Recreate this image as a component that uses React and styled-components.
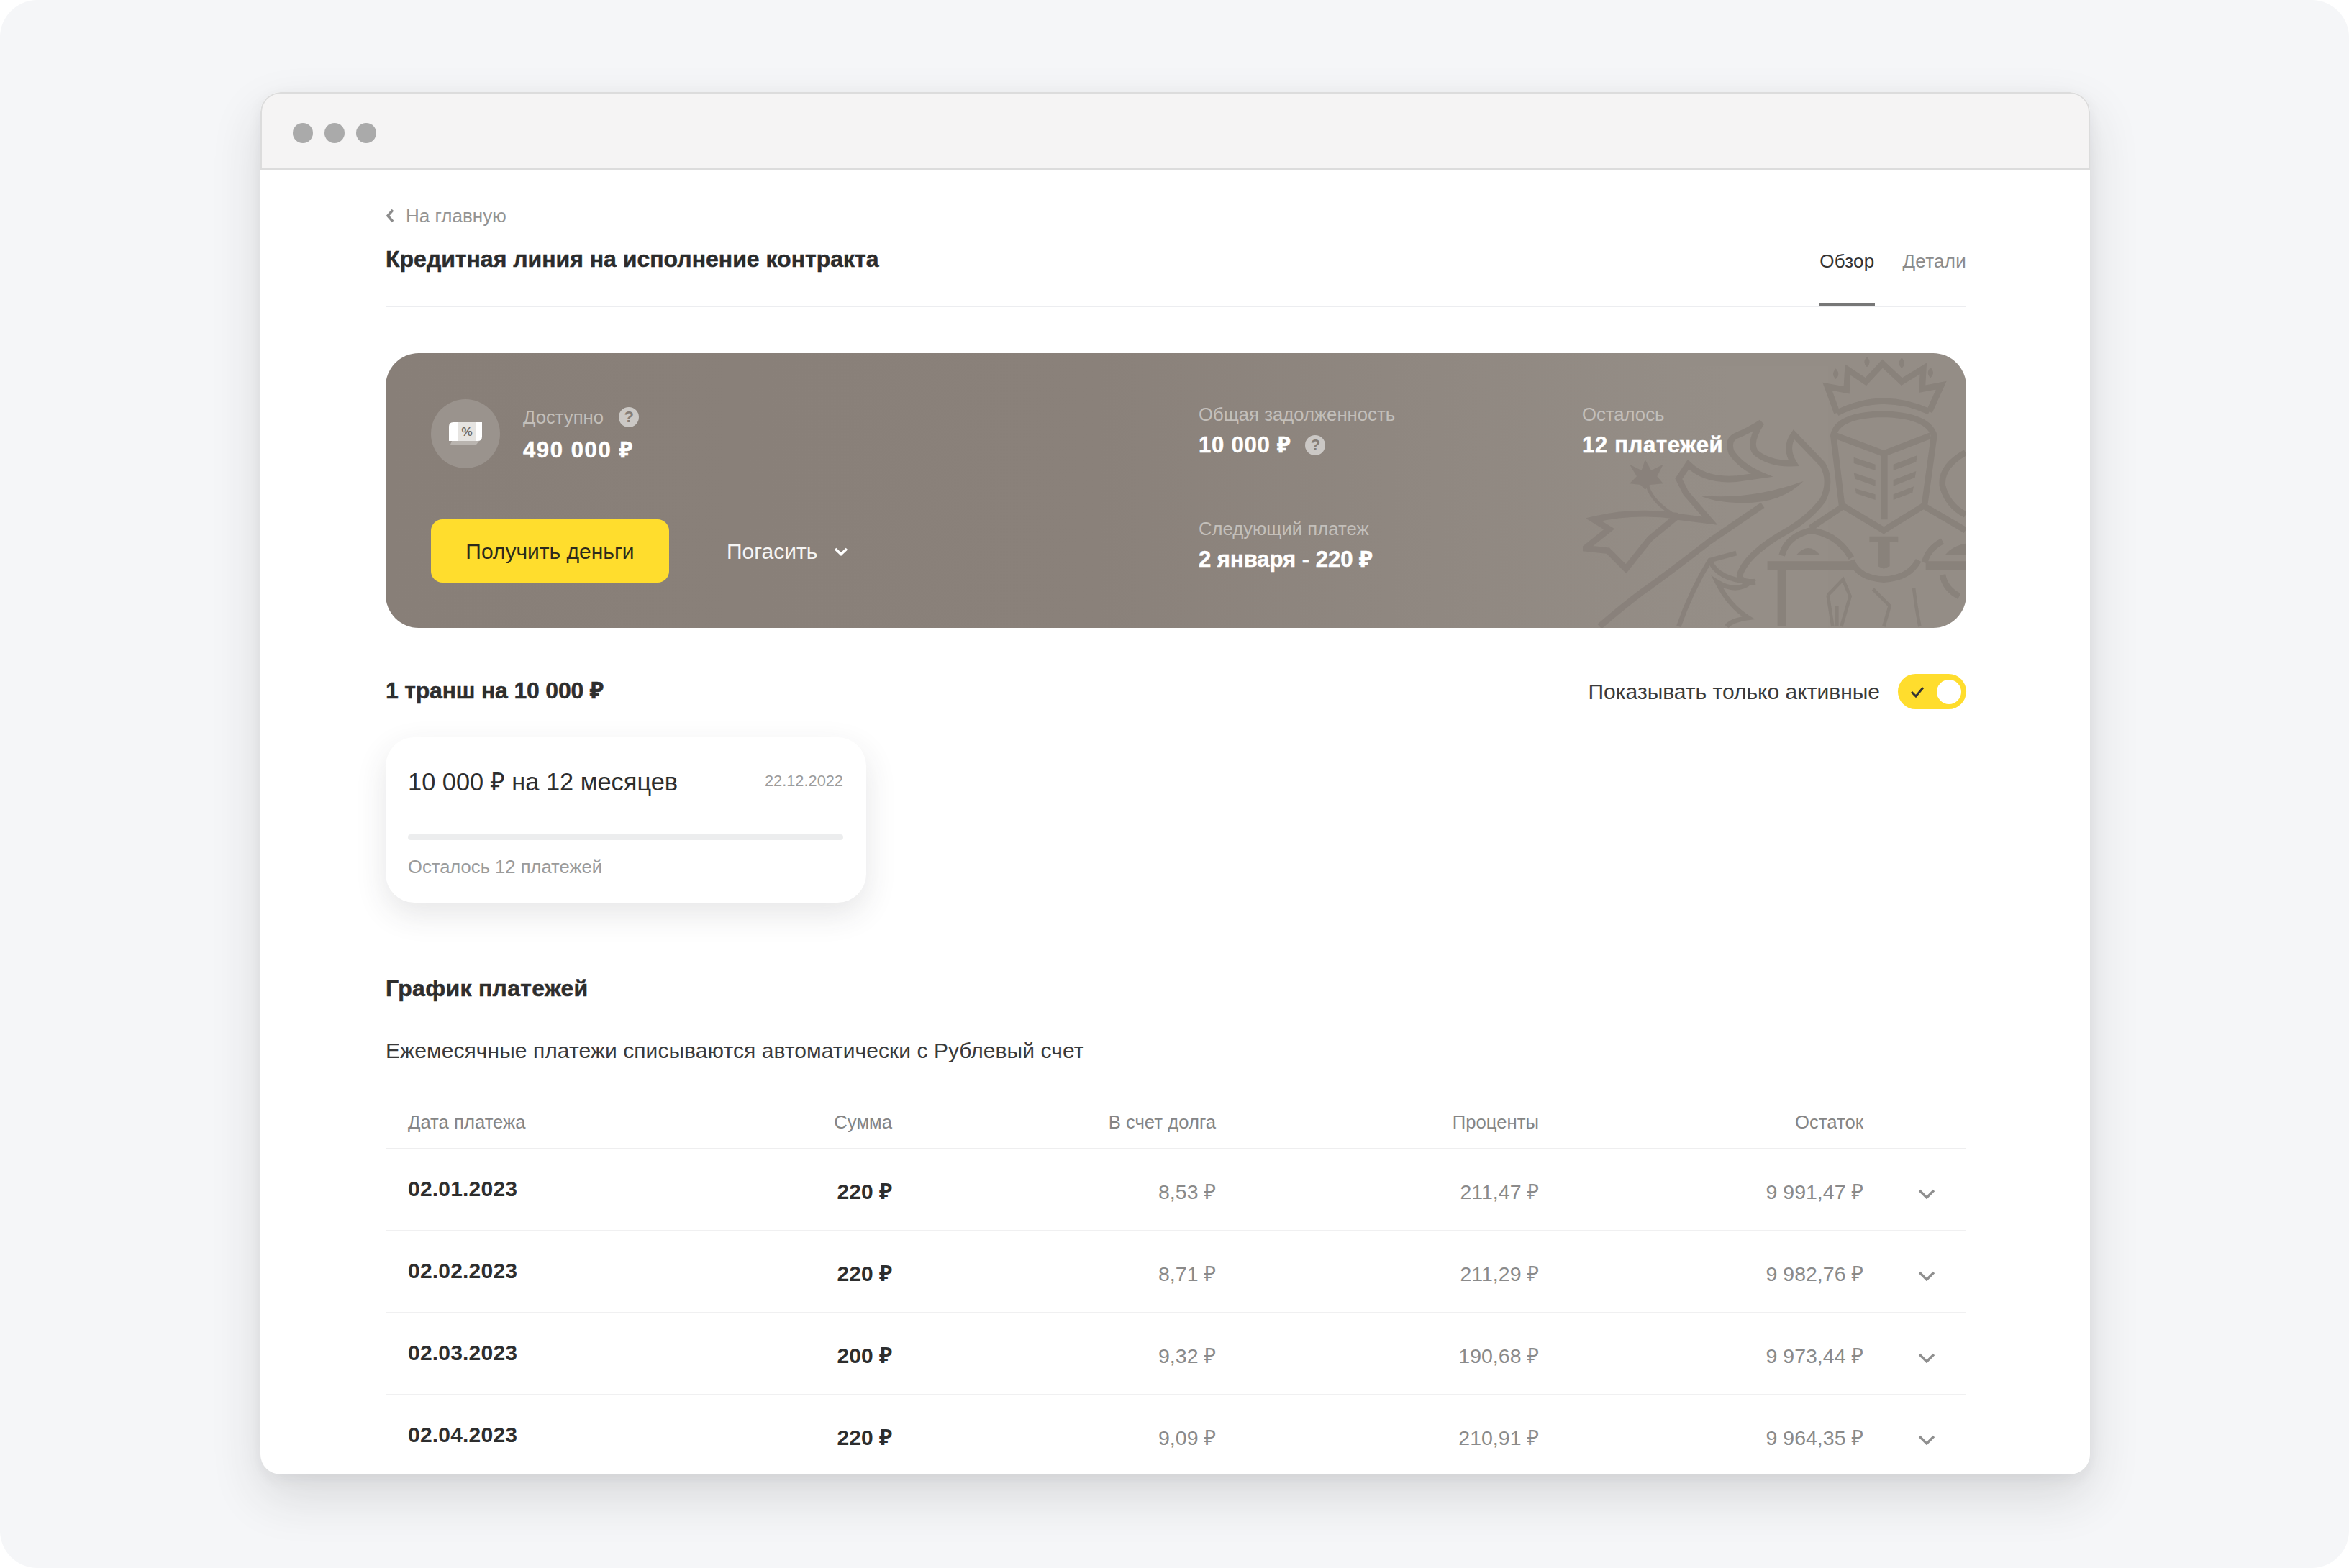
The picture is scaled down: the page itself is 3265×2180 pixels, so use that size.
import React from 'react';
import styled, { createGlobalStyle } from 'styled-components';

const Global = createGlobalStyle`
  html, body { margin: 0; padding: 0; background: #fff; }
  body { font-family: "Liberation Sans", "Noto Sans", sans-serif; color: #333; }
  * { box-sizing: border-box; }
`;

const Page = styled.div`
  width: 3265px; height: 2180px; background: #f5f6f8; border-radius: 52px;
  padding: 128px 0 0 362px; overflow: hidden;
`;
const Browser = styled.div`
  width: 2543px; height: 1922px; background: #fff; border-radius: 28px; overflow: hidden;
  box-shadow: 0 30px 70px rgba(40,40,45,.14), 0 6px 20px rgba(40,40,45,.06);
`;
const TitleBar = styled.div`
  height: 108px; background: #f5f4f4; border: 2px solid #dcdcdc; border-bottom-width: 3px;
  border-radius: 28px 28px 0 0; display: flex; align-items: center; gap: 16px; padding: 7px 0 0 43px;
`;
const Dot = styled.span`width: 28px; height: 28px; border-radius: 50%; background: #aaa;`;
const Content = styled.div`padding: 46px 172px 0 174px;`;
const BackLink = styled.div`
  height: 36px; display: flex; align-items: center; gap: 16px; color: #939393; font-size: 26px; line-height: 36px;
`;
const TitleRow = styled.div`
  height: 109px; border-bottom: 2px solid #ecedf0; display: flex; justify-content: space-between;
`;
const Title = styled.h1`
  margin: 24px 0 0; font-size: 32px; line-height: 36px; font-weight: 700; color: #2c2c2c; -webkit-text-stroke: .5px #2c2c2c;
`;
const Tabs = styled.div`display: flex; gap: 39px;`;
const Tab = styled.div`
  height: 107px; padding-top: 27px; font-size: 26px; line-height: 36px; letter-spacing: .25px;
  color: ${p => (p.$active ? '#333' : '#8b8b8b')};
  border-bottom: 4px solid ${p => (p.$active ? '#777' : 'transparent')};
`;
const Banner = styled.section`
  position: relative; overflow: hidden; margin-top: 64px; height: 382px; border-radius: 46px;
  background: linear-gradient(90deg, #887f78 0%, #8a817a 45%, #958e87 85%, #958e87 100%);
  display: flex;
`;
const Emblem = styled.svg`position: absolute; left: 1664px; top: 0; width: 532px; height: 382px;`;
const BannerLeft = styled.div`position: relative; width: 1130px; padding: 64px 0 0 63px;`;
const AvailableRow = styled.div`display: flex; gap: 32px;`;
const IconCircle = styled.div`
  width: 96px; height: 96px; border-radius: 50%; background: #9a938d;
  display: flex; align-items: center; justify-content: center;
`;
const AvailableInfo = styled.div`padding-top: 9px;`;
const LabelLine = styled.div`display: flex; align-items: center; gap: 21px; height: 32px;`;
const BannerLabel = styled.div`font-size: 25.7px; line-height: 32px; color: #c3bfba; white-space: nowrap;`;
const BannerValue = styled.div`
  font-size: 31px; line-height: 36px; font-weight: 700; color: #fff; white-space: nowrap; -webkit-text-stroke: .5px #fff;
  display: flex; align-items: center; gap: 20px; margin-top: ${p => p.$gap}px; letter-spacing: ${p => p.$track || 0}px;
`;
const Help = styled.span`
  width: 28px; height: 28px; border-radius: 50%; background: #cbc8c5; color: #857d77; letter-spacing: 0; -webkit-text-stroke: 0;
  font-size: 22px; font-weight: 700; line-height: 28px; text-align: center;
`;
const Actions = styled.div`display: flex; align-items: center; margin-top: 71px;`;
const PrimaryButton = styled.button`
  width: 331px; height: 88px; border: 0; border-radius: 16px; background: #ffdd2d; color: #2c2a1c;
  font: 400 30px "Liberation Sans", sans-serif; padding: 2px 0 0;
`;
const GhostButton = styled.button`
  margin-left: 80px; border: 0; background: none; padding: 2px 0 0; display: flex; align-items: center; gap: 23px;
  font: 400 30px "Liberation Sans", sans-serif; color: #f6f5f4;
`;
const BannerGrid = styled.div`
  position: relative; flex: 1; display: grid; grid-template-columns: 533px 1fr; grid-auto-rows: 159px; padding-top: 69px;
`;
const SectionRow = styled.div`
  display: flex; justify-content: space-between; align-items: center; height: 49px; margin-top: 64px;
`;
const SectionTitle = styled.h2`
  margin: ${p => p.$top || 0}px 0 3px; font-size: 32px; line-height: 36px; font-weight: 700; color: #2e2e2e;
  -webkit-text-stroke: .5px #2e2e2e; letter-spacing: ${p => p.$track || 0}px;
`;
const ToggleLabel = styled.label`display: flex; align-items: center; gap: 25px; font-size: 30px; color: #3a3a3a;`;
const Track = styled.span`
  width: 95px; height: 49px; border-radius: 25px; background: #ffdd2d;
  display: flex; align-items: center; justify-content: space-between; padding: 0 7px 0 17px;
`;
const Knob = styled.span`width: 34px; height: 34px; border-radius: 50%; background: #fff;`;
const TrancheCard = styled.article`
  width: 668px; height: 230px; margin-top: 39px; border-radius: 40px; background: #fff; padding: 42px 32px 0 31px;
  box-shadow: 0 16px 44px rgba(50,50,60,.12);
`;
const CardTop = styled.div`display: flex; justify-content: space-between; align-items: center;`;
const CardTitle = styled.div`font-size: 34.4px; line-height: 40px; color: #2e2e2e;`;
const CardDate = styled.div`font-size: 21.8px; color: #9c9c9c; margin-bottom: 2px;`;
const Progress = styled.div`height: 8px; margin-top: 53px; border-radius: 4px; background: #ecedee;`;
const CardNote = styled.div`margin-top: 21px; font-size: 25.6px; line-height: 32px; color: #9b9b9b;`;
const Description = styled.p`margin: 52px 0 0; font-size: 30px; line-height: 34px; letter-spacing: .07px; color: #3a3a3a;`;
const gridCols = 'grid-template-columns: 336px 337px 450px 449px 451px 1fr;';
const HeadRow = styled.div`
  display: grid; ${gridCols} margin-top: 66px; padding: 0 0 20px 31px; border-bottom: 2px solid #eeeeef;
  font-size: 25.7px; line-height: 32px; color: #858585;
`;
const Row = styled.div`
  display: grid; ${gridCols} align-items: center; height: 114px; padding: 3px 0 0 31px; border-bottom: 2px solid #f0f0f1;
  font-size: 28.5px; color: #8a8a8a;
`;
const HeadCell = styled.div`text-align: ${p => (p.$left ? 'left' : 'right')};`;
const DateCell = styled.div`font-size: 30px; font-weight: 700; letter-spacing: .2px; color: #2e2e2e; margin-bottom: 5px;`;
const SumCell = styled.div`font-size: 30px; font-weight: 700; color: #2e2e2e; text-align: right;`;
const NumCell = styled.div`text-align: right;`;
const ExpandIcon = styled.svg`margin: 9px 0 0 76px; width: 24px; height: 14px; display: block;`;

const Chevron = () => (
  <ExpandIcon viewBox="0 0 24 14"><path d="M2 2 12 12 22 2" fill="none" stroke="#8f8f8f" strokeWidth="3.4" /></ExpandIcon>
);

const rows = [
  ['02.01.2023', '220 ₽', '8,53 ₽', '211,47 ₽', '9 991,47 ₽'],
  ['02.02.2023', '220 ₽', '8,71 ₽', '211,29 ₽', '9 982,76 ₽'],
  ['02.03.2023', '200 ₽', '9,32 ₽', '190,68 ₽', '9 973,44 ₽'],
  ['02.04.2023', '220 ₽', '9,09 ₽', '210,91 ₽', '9 964,35 ₽'],
];

const Crest = () => (
  <Emblem viewBox="0 0 1596 1146" fill="none" stroke="#88807a" strokeWidth="26" strokeLinejoin="miter" opacity=".85">
    <g transform="translate(0 -6)">
      <path d="M1060 255 1020 145 1100 160 1105 75 1180 125 1250 50 1330 125 1420 70 1415 155 1495 140 1445 250" />
      <path d="M1060 255Q1250 160 1445 250" />
      <g fill="#88807a" stroke="none">
        <path d="M1055 70q22 24 0 44q-22-20 0-44zM1185 20q22 24 0 44q-22-20 0-44zM1330 25q22 24 0 44q-22-20 0-44zM1450 65q22 24 0 44q-22-20 0-44z" />
        <path d="M490 600Q700 620 920 540Q820 640 640 630Q540 625 490 600Z" />
        <path d="M890 848Q940 790 990 848Z" />
        <path d="M1510 848Q1540 810 1596 800V848Z" />
        <path d="M1195 770H1315V796L1280 792V895L1255 905 1230 895V792L1195 796Z" />
        <path d="M260 450l25 45 50-25-25 50 25 30-55 5-20 20-20-20-45-5 30-30-30-50 50 25z" />
        <path d="M1130 440 1220 470V495L1130 465ZM1130 505 1220 535V560L1135 530ZM1135 570 1220 595V618L1140 592Z" />
        <path d="M1395 432 1295 470V495L1390 460ZM1390 498 1295 535V560L1385 525ZM1380 562 1295 595V618L1375 588Z" />
      </g>
      <path d="M1080 640 1045 350Q1060 265 1250 260Q1440 265 1465 350L1425 640 1255 745Z" />
      <path d="M1055 350 1255 425 1450 350M1258 425V700" />
      <path d="M1085 645 950 735M1425 645 1596 745" />
      <path d="M830 850Q850 770 950 745Q1060 760 1120 860" />
      <path d="M1425 880Q1440 820 1500 790" />
      <path d="M1120 870Q1150 945 1255 950Q1360 945 1400 870" />
      <path d="M770 892H1130M1430 892H1596" strokeWidth="36" />
      <path d="M830 905V1146" strokeWidth="36" />
      <path d="M1022 1015 1085 950 1115 1020 1078 1146M1022 1015 1042 1146M1060 1060V1146" strokeWidth="14" />
      <path d="M1210 990 1280 1060 1255 1146M1380 985 1390 1060 1405 1146" strokeWidth="14" />
      <path d="M1596 420Q1490 480 1500 560Q1520 640 1596 680" />
      <path d="M1500 930Q1510 990 1570 1020" />
      <path d="M270 560Q290 630 395 690" strokeWidth="14" />
      <path d="M395 688 530 705 430 590 400 530 440 470Q510 540 640 530L745 515Q660 480 620 420Q600 370 640 350Q690 330 745 295Q690 380 720 420Q780 470 880 465Q840 400 880 345L1000 470Q1040 540 1000 620Q940 700 830 760Q680 850 655 930Q650 965 720 960" />
      <path d="M395 685Q210 660 45 700L110 740 10 820 105 830 180 905 280 780 395 685" />
      <path d="M750 640 530 790Q350 930 250 1000Q170 1060 70 1146" />
      <path d="M640 840 530 870Q450 1000 400 1146" strokeWidth="20" />
      <path d="M530 870Q560 950 700 960Q640 1010 560 960Q610 1060 690 1110Q620 1120 600 1146" strokeWidth="20" />
    </g>
  </Emblem>
);

export default function App() {
  return (
    <Page>
      <Global />
      <Browser>
        <TitleBar><Dot /><Dot /><Dot /></TitleBar>
        <Content>
          <BackLink>
            <svg width="12" height="20" viewBox="0 0 12 20"><path d="M10 2 3 10l7 8" fill="none" stroke="#8c8c8c" strokeWidth="3.5" /></svg>
            На главную
          </BackLink>
          <TitleRow>
            <Title>Кредитная линия на исполнение контракта</Title>
            <Tabs>
              <Tab $active>Обзор</Tab>
              <Tab>Детали</Tab>
            </Tabs>
          </TitleRow>
          <Banner>
            <Crest />
            <BannerLeft>
              <AvailableRow>
                <IconCircle>
                  <svg width="46" height="32" viewBox="0 0 46 32">
                    <path d="M4 26h38l-4 5H2z" fill="#b9b4af" />
                    <path d="M6 0h40v20q0 6-6 6H0V6q0-6 6-6z" fill="#fff" />
                    <rect x="12" y="0" width="26" height="26" fill="#e6e4e1" />
                    <text x="25" y="19" textAnchor="middle" fontSize="17" fontWeight="700" fontFamily="Liberation Sans" fill="#6f6a65">%</text>
                  </svg>
                </IconCircle>
                <AvailableInfo>
                  <LabelLine><BannerLabel>Доступно</BannerLabel><Help>?</Help></LabelLine>
                  <BannerValue $gap={12} $track={1.6}>490 000 ₽</BannerValue>
                </AvailableInfo>
              </AvailableRow>
              <Actions>
                <PrimaryButton>Получить деньги</PrimaryButton>
                <GhostButton>
                  Погасить
                  <svg width="20" height="12" viewBox="0 0 20 12"><path d="M2 2l8 7.5 8-7.5" fill="none" stroke="#fff" strokeWidth="3.6" /></svg>
                </GhostButton>
              </Actions>
            </BannerLeft>
            <BannerGrid>
              <div>
                <BannerLabel>Общая задолженность</BannerLabel>
                <BannerValue $gap={9} $track={.8}>10 000 ₽<Help>?</Help></BannerValue>
              </div>
              <div>
                <BannerLabel>Осталось</BannerLabel>
                <BannerValue $gap={9} $track={.7}>12 платежей</BannerValue>
              </div>
              <div>
                <BannerLabel>Следующий платеж</BannerLabel>
                <BannerValue $gap={9}>2 января - 220 ₽</BannerValue>
              </div>
            </BannerGrid>
          </Banner>
          <SectionRow>
            <SectionTitle $track={-.2}>1 транш на 10 000 ₽</SectionTitle>
            <ToggleLabel>
              Показывать только активные
              <Track>
                <svg width="20" height="16" viewBox="0 0 20 16"><path d="M2 8l6 6L18 2" fill="none" stroke="#333" strokeWidth="3" /></svg>
                <Knob />
              </Track>
            </ToggleLabel>
          </SectionRow>
          <TrancheCard>
            <CardTop>
              <CardTitle>10 000 ₽ на 12 месяцев</CardTitle>
              <CardDate>22.12.2022</CardDate>
            </CardTop>
            <Progress />
            <CardNote>Осталось 12 платежей</CardNote>
          </TrancheCard>
          <SectionTitle $top={101} $track={.3}>График платежей</SectionTitle>
          <Description>Ежемесячные платежи списываются автоматически с Рублевый счет</Description>
          <HeadRow>
            <HeadCell $left>Дата платежа</HeadCell>
            <HeadCell>Сумма</HeadCell>
            <HeadCell>В счет долга</HeadCell>
            <HeadCell>Проценты</HeadCell>
            <HeadCell>Остаток</HeadCell>
            <span />
          </HeadRow>
          {rows.map(r => (
            <Row key={r[0]}>
              <DateCell>{r[0]}</DateCell>
              <SumCell>{r[1]}</SumCell>
              <NumCell>{r[2]}</NumCell>
              <NumCell>{r[3]}</NumCell>
              <NumCell>{r[4]}</NumCell>
              <Chevron />
            </Row>
          ))}
        </Content>
      </Browser>
    </Page>
  );
}
